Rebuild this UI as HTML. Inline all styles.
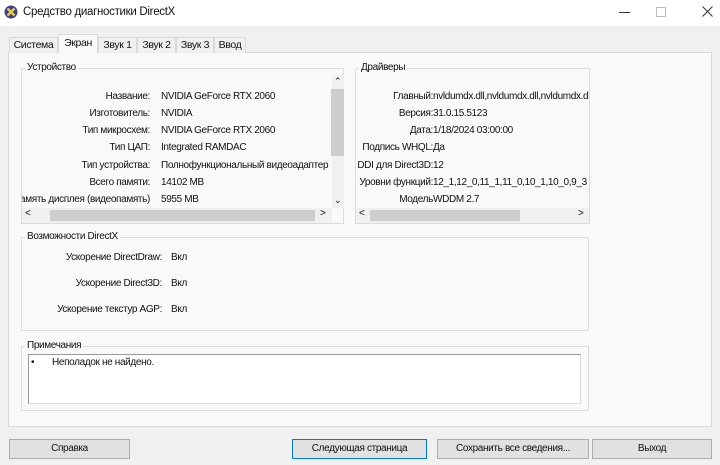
<!DOCTYPE html>
<html><head><meta charset="utf-8"><style>
*{margin:0;padding:0;box-sizing:border-box}
body{width:720px;height:465px;background:#f0f0f0;font-family:"Liberation Sans","DejaVu Sans",sans-serif;font-size:10px;letter-spacing:-0.35px;color:#111;position:relative;overflow:hidden}
.a{position:absolute;white-space:nowrap}
.title{position:absolute;left:0;top:0;width:720px;height:26px;background:#fff}
.tab{position:absolute;top:37px;height:16px;border:1px solid #d9d9d9;border-bottom:none;background:#f0f0f0;text-align:center;line-height:14px;font-size:10.5px}
.panel{position:absolute;left:8px;top:52px;width:704px;height:375px;background:#f9f9f9;border:1px solid #d9d9d9}
.grp{position:absolute;border:1px solid #dcdcdc}
.r{text-align:right}
.btn{position:absolute;top:439px;height:20px;background:#e1e1e1;border:1px solid #adadad;text-align:center;line-height:18px}
.sb{position:absolute;background:#f0f0f0}
</style></head><body>
<div class="title"></div>
<svg class="a" style="left:4px;top:5px" width="14" height="14" viewBox="0 0 14 14"><circle cx="7" cy="7" r="6.5" fill="#3a3f8f"/><path d="M3.5 3.5L10.5 10.5M10.5 3.5L3.5 10.5" stroke="#e8d040" stroke-width="2.4"/></svg>
<div class="a" style="left:23px;top:6px;font-size:11.5px;letter-spacing:-0.3px">Средство диагностики DirectX</div>
<div class="a" style="left:619px;top:12px;width:11px;height:1px;background:#333"></div>
<div class="a" style="left:656px;top:7px;width:10px;height:10px;border:1px solid #bbb"></div>
<svg class="a" style="left:702px;top:6px" width="11" height="11" viewBox="0 0 11 11"><path d="M0.5 0.5L10.5 10.5M10.5 0.5L0.5 10.5" stroke="#333" stroke-width="1"/></svg>

<div class="panel"></div>
<div class="tab" style="left:9px;width:49px">Система</div>
<div class="tab" style="left:58px;top:34px;height:19px;width:40px;background:#f9f9f9;line-height:16px">Экран</div>
<div class="tab" style="left:98px;width:39px">Звук 1</div>
<div class="tab" style="left:137px;width:39px">Звук 2</div>
<div class="tab" style="left:176px;width:38px">Звук 3</div>
<div class="tab" style="left:214px;width:32px">Ввод</div>

<div class="grp" style="left:21px;top:68px;width:323px;height:156px"></div>
<div class="a" style="left:25px;top:62px;background:#f9f9f9;padding:0 2px">Устройство</div>
<div class="sb" style="left:332px;top:75px;width:12px;height:133px"></div>
<div class="a" style="left:331px;top:89px;width:13px;height:67px;background:#cdcdcd"></div>
<div class="a" style="left:334px;top:76px;font-size:9px">&#8963;</div>
<div class="a" style="left:334px;top:195px;font-size:9px">&#8964;</div>
<div class="sb" style="left:22px;top:208px;width:310px;height:15px"></div>
<div class="a" style="left:50px;top:210px;width:265px;height:11px;background:#cdcdcd"></div>
<div class="a" style="left:25px;top:208px">&lt;</div><div class="a" style="left:320px;top:208px">&gt;</div>
<div class="a r" style="left:22px;width:128px;top:91px">Название:</div><div class="a" style="left:161px;top:91px">NVIDIA GeForce RTX 2060</div>
<div class="a r" style="left:22px;width:128px;top:108px">Изготовитель:</div><div class="a" style="left:161px;top:108px">NVIDIA</div>
<div class="a r" style="left:22px;width:128px;top:125px">Тип микросхем:</div><div class="a" style="left:161px;top:125px">NVIDIA GeForce RTX 2060</div>
<div class="a r" style="left:22px;width:128px;top:142px">Тип ЦАП:</div><div class="a" style="left:161px;top:142px">Integrated RAMDAC</div>
<div class="a r" style="left:22px;width:128px;top:160px">Тип устройства:</div><div class="a" style="left:161px;top:160px">Полнофункциональный видеоадаптер</div>
<div class="a r" style="left:22px;width:128px;top:177px">Всего памяти:</div><div class="a" style="left:161px;top:177px">14102 MB</div>
<div class="a" style="left:22px;width:128px;top:194px;overflow:hidden;direction:rtl">Память дисплея (видеопамять):</div><div class="a" style="left:161px;top:194px">5955 MB</div>

<div class="grp" style="left:355px;top:68px;width:235px;height:156px"></div>
<div class="a" style="left:359px;top:62px;background:#f9f9f9;padding:0 2px">Драйверы</div>
<div class="a r" style="left:356px;width:77px;top:91px">Главный:</div><div class="a" style="left:433px;top:91px;width:156px;overflow:hidden">nvldumdx.dll,nvldumdx.dll,nvldumdx.dll</div>
<div class="a r" style="left:356px;width:77px;top:108px">Версия:</div><div class="a" style="left:433px;top:108px">31.0.15.5123</div>
<div class="a r" style="left:356px;width:77px;top:125px">Дата:</div><div class="a" style="left:433px;top:125px">1/18/2024 03:00:00</div>
<div class="a r" style="left:356px;width:77px;top:142px">Подпись WHQL:</div><div class="a" style="left:433px;top:142px">Да</div>
<div class="a r" style="left:356px;width:77px;top:160px">DDI для Direct3D:</div><div class="a" style="left:433px;top:160px">12</div>
<div class="a r" style="left:356px;width:77px;top:177px">Уровни функций:</div><div class="a" style="left:433px;top:177px;width:156px;overflow:hidden">12_1,12_0,11_1,11_0,10_1,10_0,9_3</div>
<div class="a r" style="left:356px;width:77px;top:194px">Модель</div><div class="a" style="left:433px;top:194px">WDDM 2.7</div>
<div class="sb" style="left:356px;top:208px;width:233px;height:15px"></div>
<div class="a" style="left:370px;top:210px;width:150px;height:11px;background:#cdcdcd"></div>
<div class="a" style="left:359px;top:208px">&lt;</div><div class="a" style="left:578px;top:208px">&gt;</div>

<div class="grp" style="left:21px;top:237px;width:568px;height:94px"></div>
<div class="a" style="left:25px;top:231px;background:#f9f9f9;padding:0 2px">Возможности DirectX</div>
<div class="a r" style="left:22px;width:140px;top:252px">Ускорение DirectDraw:</div><div class="a" style="left:171px;top:252px">Вкл</div>
<div class="a r" style="left:22px;width:140px;top:278px">Ускорение Direct3D:</div><div class="a" style="left:171px;top:278px">Вкл</div>
<div class="a r" style="left:22px;width:140px;top:304px">Ускорение текстур AGP:</div><div class="a" style="left:171px;top:304px">Вкл</div>

<div class="grp" style="left:21px;top:346px;width:568px;height:65px"></div>
<div class="a" style="left:25px;top:340px;background:#f9f9f9;padding:0 2px">Примечания</div>
<div class="a" style="left:28px;top:354px;width:553px;height:50px;background:#fff;border:1px solid #999;border-right-color:#ddd;border-bottom-color:#ddd"></div>
<div class="a" style="left:31px;top:357px">•</div><div class="a" style="left:52px;top:357px">Неполадок не найдено.</div>

<div class="btn" style="left:9px;width:121px">Справка</div>
<div class="btn" style="left:292px;width:135px;border-color:#0078d7">Следующая страница</div>
<div class="btn" style="left:437px;width:152px">Сохранить все сведения...</div>
<div class="btn" style="left:592px;width:120px">Выход</div>
</body></html>
